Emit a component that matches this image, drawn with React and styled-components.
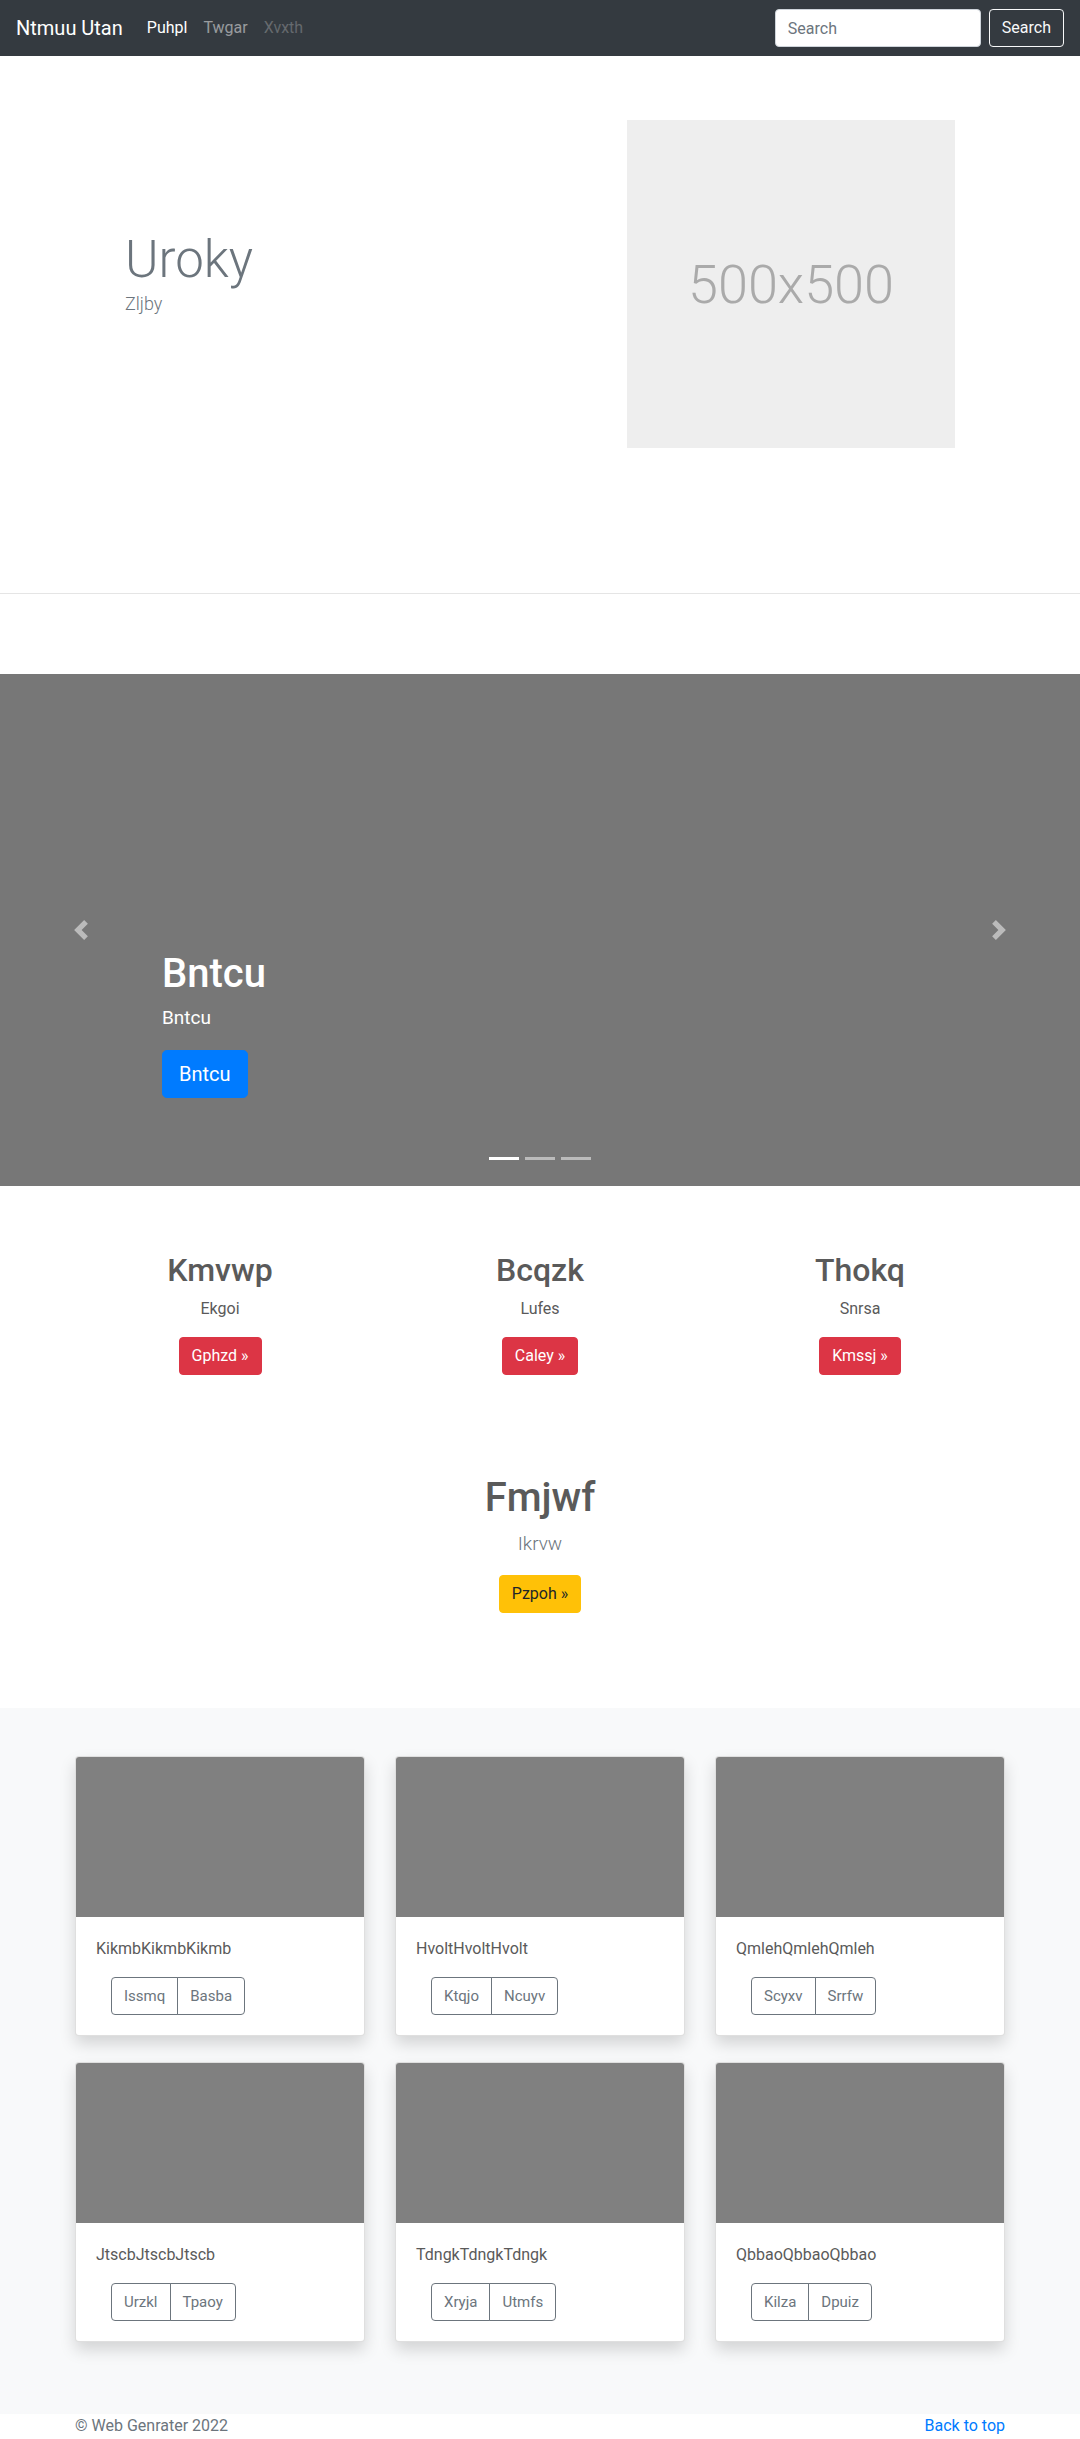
import React from 'react';
import styled, { createGlobalStyle } from 'styled-components';

//******* DATA *********************************/
const features = [
  { title: 'Kmvwp', text: 'Ekgoi', btn: 'Gphzd' },
  { title: 'Bcqzk', text: 'Lufes', btn: 'Caley' },
  { title: 'Thokq', text: 'Snrsa', btn: 'Kmssj' },
];

const cards = [
  { text: 'KikmbKikmbKikmb', btns: ['Issmq', 'Basba'] },
  { text: 'HvoltHvoltHvolt', btns: ['Ktqjo', 'Ncuyv'] },
  { text: 'QmlehQmlehQmleh', btns: ['Scyxv', 'Srrfw'] },
  { text: 'JtscbJtscbJtscb', btns: ['Urzkl', 'Tpaoy'] },
  { text: 'TdngkTdngkTdngk', btns: ['Xryja', 'Utmfs'] },
  { text: 'QbbaoQbbaoQbbao', btns: ['Kilza', 'Dpuiz'] },
];

//******* STYLING *********************************/
const GlobalStyle = createGlobalStyle`
  * { box-sizing: border-box; }
  body {
    margin: 0;
    font-family: Roboto, "Liberation Sans", sans-serif;
    font-size: 16px;
    line-height: 1.5;
    color: #5a5a5a;
    background: #fff;
  }
  h1, h2, p { margin: 0; }
`;

const Navbar = styled.nav`
  height: 56px;
  background: #343a40;
  display: flex;
  align-items: center;
  padding: 0 16px;
`;

const Brand = styled.a`
  font-size: 20px;
  line-height: 30px;
  color: #fff;
  margin-right: 16px;
`;

const NavLinks = styled.div`
  display: flex;
  flex: 1;
`;

const NavLink = styled.a`
  padding: 8px;
  color: ${(p) => (p.$state === 'active' ? '#fff' : p.$state === 'disabled' ? 'rgba(255,255,255,.25)' : 'rgba(255,255,255,.5)')};
`;

const SearchForm = styled.form`
  display: flex;
  align-items: center;
  gap: 8px;
`;

const SearchInput = styled.input`
  width: 206px;
  height: 38px;
  padding: 6px 12px;
  font: inherit;
  font-size: 16px;
  color: #495057;
  border: 1px solid #ced4da;
  border-radius: 4px;
  &::placeholder { color: #6c757d; }
`;

const OutlineLight = styled.button`
  height: 38px;
  padding: 6px 12px;
  font: inherit;
  font-size: 16px;
  color: #f8f9fa;
  background: transparent;
  border: 1px solid #f8f9fa;
  border-radius: 4px;
`;

const Hero = styled.section`
  padding: 64px 0 145px;
  border-bottom: 1px solid rgba(0, 0, 0, 0.1);
`;

const HeroInner = styled.div`
  width: 960px;
  margin: 0 auto;
  display: grid;
  grid-template-columns: 1fr 1fr;
  align-items: center;
`;

const HeroText = styled.div`
  padding: 0 0 22px 65px;
`;

const HeroTitle = styled.h1`
  font-size: 51px;
  font-weight: 300;
  line-height: 1.2;
  color: #6c757d;
`;

const HeroLead = styled.p`
  font-size: 18px;
  font-weight: 300;
  color: #6c757d;
`;

const Placeholder = styled.div`
  width: 328px;
  height: 328px;
  margin-left: 87px;
  background: #eee;
  color: #aaa;
  font-size: 54px;
  font-weight: 300;
  display: flex;
  align-items: center;
  justify-content: center;
`;

const Carousel = styled.section`
  position: relative;
  margin-top: 80px;
  height: 512px;
  background: #777;
`;

const Control = styled.a`
  position: absolute;
  top: 0;
  bottom: 0;
  ${(p) => (p.$side === 'left' ? 'left: 0;' : 'right: 0;')}
  width: 15%;
  display: flex;
  align-items: center;
  justify-content: center;
  opacity: 0.5;
`;

const Caption = styled.div`
  position: absolute;
  left: 15%;
  right: 15%;
  bottom: 88px;
  color: #fff;
  text-align: left;
`;

const CaptionTitle = styled.h1`
  font-size: 40px;
  font-weight: 500;
  line-height: 1.2;
  margin-bottom: 6px;
`;

const CaptionText = styled.p`
  font-size: 19px;
  margin-bottom: 18px;
`;

const Button = styled.a`
  display: inline-block;
  font-size: ${(p) => (p.$lg ? '20px' : '16px')};
  line-height: 1.5;
  padding: ${(p) => (p.$lg ? '8px 16px' : '6px 12px')};
  border-radius: ${(p) => (p.$lg ? '4.8px' : '4px')};
  border: 1px solid ${(p) => p.$bg};
  background: ${(p) => p.$bg};
  color: ${(p) => p.$fg || '#fff'};
`;

const Indicators = styled.ol`
  position: absolute;
  left: 0;
  right: 0;
  bottom: 16px;
  margin: 0;
  padding: 0;
  list-style: none;
  display: flex;
  justify-content: center;
`;

const Indicator = styled.li`
  width: 30px;
  height: 3px;
  margin: 10px 3px;
  background: #fff;
  opacity: ${(p) => (p.$active ? 1 : 0.5)};
`;

const Marketing = styled.section`
  width: 960px;
  margin: 65px auto 0;
  text-align: center;
`;

const FeatureRow = styled.div`
  display: grid;
  grid-template-columns: repeat(3, 1fr);
`;

const Feature = styled.div`
  padding: 0 15px 16px;
`;

const FeatureTitle = styled.h2`
  font-size: 32px;
  font-weight: 500;
  line-height: 1.2;
  margin-bottom: 8px;
`;

const FeatureText = styled.p`
  margin-bottom: 16px;
`;

const Spotlight = styled.div`
  margin-top: 83px;
  padding-bottom: 95px;
`;

const SpotTitle = styled.h1`
  font-size: 40px;
  font-weight: 500;
  line-height: 1.2;
  margin-bottom: 8px;
`;

const SpotLead = styled.p`
  font-size: 19px;
  font-weight: 300;
  color: #6c757d;
  margin-bottom: 16px;
`;

const Album = styled.section`
  background: #f8f9fa;
  padding: 48px 0 24px;
`;

const CardGrid = styled.div`
  width: 930px;
  margin: 0 auto;
  display: grid;
  grid-template-columns: repeat(3, 1fr);
  column-gap: 30px;
  row-gap: 26px;
  padding-bottom: 48px;
`;

const Card = styled.div`
  background: #fff;
  border: 1px solid rgba(0, 0, 0, 0.125);
  border-radius: 4px;
  overflow: hidden;
  box-shadow: 0 8px 16px rgba(0, 0, 0, 0.15);
`;

const CardImage = styled.div`
  height: 160px;
  background: #808080;
`;

const CardBody = styled.div`
  padding: 20px;
`;

const CardText = styled.p`
  margin-bottom: 16px;
`;

const BtnGroup = styled.div`
  display: inline-flex;
  margin-left: 15px;
`;

const GroupButton = styled.button`
  height: 38px;
  padding: 6px 12px;
  font: inherit;
  font-size: 15px;
  color: #6c757d;
  background: transparent;
  border: 1px solid #6c757d;
  border-radius: ${(p) => (p.$first ? '4px 0 0 4px' : '0 4px 4px 0')};
  margin-left: ${(p) => (p.$first ? '0' : '-1px')};
`;

const Footer = styled.footer`
  width: 960px;
  margin: 0 auto;
  padding: 0 15px 32px;
  display: flex;
  justify-content: space-between;
  color: #6c757d;
`;

const TopLink = styled.a`
  color: #007bff;
`;

//********************************************** */

const Chevron = ({ flip }) => (
  <svg width="20" height="20" viewBox="0 0 8 8" fill="#fff" style={flip ? { transform: 'scaleX(-1)' } : undefined}>
    <path d="M5.25 0l-4 4 4 4 1.5-1.5L4.25 4l2.5-2.5L5.25 0z" />
  </svg>
);

const App = () => (
  <>
    <GlobalStyle />
    <Navbar>
      <Brand>Ntmuu Utan</Brand>
      <NavLinks>
        <NavLink $state="active">Puhpl</NavLink>
        <NavLink>Twgar</NavLink>
        <NavLink $state="disabled">Xvxth</NavLink>
      </NavLinks>
      <SearchForm onSubmit={(e) => e.preventDefault()}>
        <SearchInput placeholder="Search" />
        <OutlineLight>Search</OutlineLight>
      </SearchForm>
    </Navbar>

    <Hero>
      <HeroInner>
        <HeroText>
          <HeroTitle>Uroky</HeroTitle>
          <HeroLead>Zljby</HeroLead>
        </HeroText>
        <Placeholder>500x500</Placeholder>
      </HeroInner>
    </Hero>

    <Carousel>
      <Control $side="left"><Chevron /></Control>
      <Caption>
        <CaptionTitle>Bntcu</CaptionTitle>
        <CaptionText>Bntcu</CaptionText>
        <Button $lg $bg="#007bff">Bntcu</Button>
      </Caption>
      <Control $side="right"><Chevron flip /></Control>
      <Indicators>
        <Indicator $active />
        <Indicator />
        <Indicator />
      </Indicators>
    </Carousel>

    <Marketing>
      <FeatureRow>
        {features.map((f) => (
          <Feature key={f.title}>
            <FeatureTitle>{f.title}</FeatureTitle>
            <FeatureText>{f.text}</FeatureText>
            <Button $bg="#dc3545">{f.btn} &raquo;</Button>
          </Feature>
        ))}
      </FeatureRow>
      <Spotlight>
        <SpotTitle>Fmjwf</SpotTitle>
        <SpotLead>Ikrvw</SpotLead>
        <Button $bg="#ffc107" $fg="#212529">Pzpoh &raquo;</Button>
      </Spotlight>
    </Marketing>

    <Album>
      <CardGrid>
        {cards.map((c) => (
          <Card key={c.text}>
            <CardImage />
            <CardBody>
              <CardText>{c.text}</CardText>
              <BtnGroup>
                <GroupButton $first>{c.btns[0]}</GroupButton>
                <GroupButton>{c.btns[1]}</GroupButton>
              </BtnGroup>
            </CardBody>
          </Card>
        ))}
      </CardGrid>
    </Album>

    <Footer>
      <span>&copy; Web Genrater 2022</span>
      <TopLink>Back to top</TopLink>
    </Footer>
  </>
);

export default App;
